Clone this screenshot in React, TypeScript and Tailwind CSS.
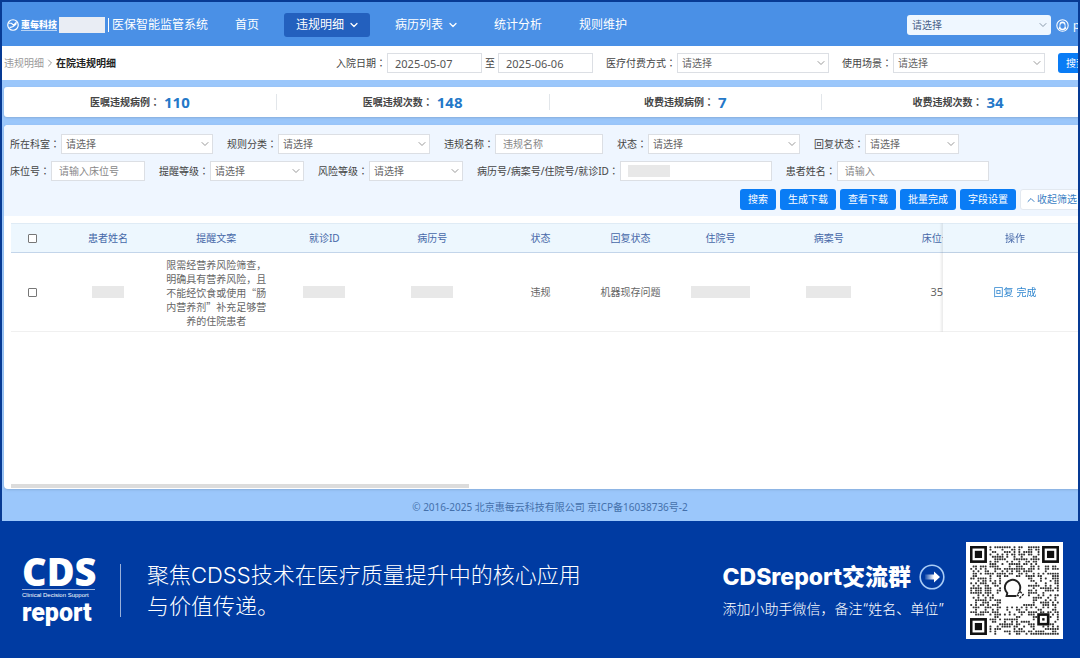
import type { ReactNode } from 'react'
import { ChevronDown, ChevronRight, ChevronUp } from 'lucide-react'
import clsx from 'clsx'

const navItems = [
  { label: '首页' },
  { label: '违规明细', active: true, menu: true },
  { label: '病历列表', menu: true },
  { label: '统计分析' },
  { label: '规则维护' },
]

const stats = [
  { label: '医嘱违规病例', value: 110 },
  { label: '医嘱违规次数', value: 148 },
  { label: '收费违规病例', value: 7 },
  { label: '收费违规次数', value: 34 },
]

const actions = ['搜索', '生成下载', '查看下载', '批量完成', '字段设置']

const columns = [
  { label: '患者姓名', width: 'w-[108px]' },
  { label: '提醒文案', width: 'w-[108px]' },
  { label: '就诊ID', width: 'w-[108px]' },
  { label: '病历号', width: 'w-[108px]' },
  { label: '状态', width: 'w-[108px]' },
  { label: '回复状态', width: 'w-[72px]' },
  { label: '住院号', width: 'w-[108px]' },
  { label: '病案号', width: 'w-[108px]' },
  { label: '床位号', width: 'w-[108px]' },
]

function Field({ id, label, children }: { id: string; label: string; children: ReactNode }) {
  return (
    <div className="flex items-center">
      <label htmlFor={id} className="mr-px whitespace-nowrap text-[#444]">
        {label}
        <span className="font-['Noto_Sans_CJK_TC',sans-serif]">：</span>
      </label>
      {children}
    </div>
  )
}

function Select({ id, className }: { id: string; className: string }) {
  return (
    <div className={clsx('relative', className)}>
      <select
        id={id}
        className="block h-5 w-full appearance-none border border-[#dcdfe4] bg-white pl-1 pr-4 text-[#666] outline-none"
      >
        <option>请选择</option>
      </select>
      <ChevronDown className="pointer-events-none absolute right-0.5 top-1 size-3 text-[#999]" />
    </div>
  )
}

function TextInput({ id, className, ...rest }: { id: string; className: string; placeholder?: string; defaultValue?: string }) {
  return (
    <input
      id={id}
      type="text"
      className={clsx('h-5 border border-[#dcdfe4] bg-white px-[7px] text-[#555] outline-none placeholder:text-[#888]', className)}
      {...rest}
    />
  )
}

function Masked({ className }: { className: string }) {
  return <div className={clsx('mx-auto h-3 bg-[#e8e8e8]', className)} />
}

function Header() {
  return (
    <header className="flex h-11 items-center bg-[#4a90e6] pl-[5px] pt-0.5 text-white">
      <svg viewBox="0 0 24 24" className="size-3 shrink-0" fill="none" stroke="currentColor" strokeWidth="2.4">
        <circle cx="12" cy="12" r="10.5" />
        <path d="M3 8.500h6l4 4 6-6M5 16.500c5 1 9-1 14-7.500" />
      </svg>
      <div className="ml-0.5 mr-0.5 shrink-0 font-black">
        <div className="text-[9px] leading-[11px]">惠每科技</div>
        <div className="h-px bg-white/60" />
      </div>
      <div className="h-4 w-[46px] shrink-0 bg-[#e9edf4]" />
      <div className="ml-[3px] h-3.5 w-px shrink-0 bg-white" />
      <h1 className="ml-[3px] whitespace-nowrap text-[12px]">医保智能监管系统</h1>
      <nav className="ml-[15px] flex gap-[13px]">
        {navItems.map((item) => (
          <button
            key={item.label}
            type="button"
            className={clsx(
              'flex h-6 items-center gap-1 whitespace-nowrap rounded-[3px] pl-3 text-[12px]',
              item.menu ? 'pr-2.5' : 'pr-3',
              item.active && 'bg-[#2360be]'
            )}
          >
            {item.label}
            {item.menu && <ChevronDown className="size-3" strokeWidth={2.5} />}
          </button>
        ))}
      </nav>
      <div className="relative ml-auto w-36 shrink-0">
        <select
          aria-label="院区"
          className="block h-5 w-full appearance-none rounded-[3px] bg-[#eff7ff] pl-[5px] pr-4 text-[#4a6288] outline-none"
        >
          <option>请选择</option>
        </select>
        <ChevronDown className="pointer-events-none absolute right-0.5 top-1 size-3 text-[#8899aa]" />
      </div>
      <button type="button" className="ml-[5px] flex w-[38px] shrink-0 items-center gap-1">
        <svg viewBox="0 0 24 24" className="size-[13px]">
          <circle cx="12" cy="12" r="10.5" fill="none" stroke="#fff" strokeWidth="2" />
          <path d="M12 4.500a5.500 5.500 0 0 0-5.500 5.500v3c0 2-1 3-2 4a9.500 9.500 0 0 0 15 0c-1-1-2-2-2-4v-3A5.500 5.500 0 0 0 12 4.500Z" fill="#fff" />
          <path d="M8 12a4 4 0 0 1 8 0v2a4 4 0 0 1-8 0Z" fill="#4a90e6" />
        </svg>
        <span className="text-[11px]">p</span>
      </button>
    </header>
  )
}

function TopBar() {
  return (
    <div className="flex h-[34px] items-center bg-white pl-0.5">
      <div className="flex items-center whitespace-nowrap">
        <a href="#" className="text-[#999]">违规明细</a>
        <ChevronRight className="size-3 text-[#999]" />
        <span className="font-bold text-[#222]">在院违规明细</span>
      </div>
      <div className="ml-auto flex shrink-0 items-center gap-[13px]">
        <Field id="from" label="入院日期">
          <TextInput id="from" defaultValue="2025-05-07" className="w-[95px] text-[11px]" />
          <label htmlFor="to" className="mx-[3px] text-[#444]">至</label>
          <TextInput id="to" defaultValue="2025-06-06" className="w-[95px] text-[11px]" />
        </Field>
        <Field id="pay" label="医疗付费方式">
          <Select id="pay" className="w-[152px]" />
        </Field>
        <Field id="scene" label="使用场景">
          <Select id="scene" className="w-[152px]" />
        </Field>
        <button type="button" className="h-5 rounded-[3px] bg-[#0a7cf5] px-2 text-white">搜索</button>
      </div>
    </div>
  )
}

function Filters() {
  return (
    <div className="bg-[#eff6ff] pb-1.5 pl-1.5 pr-2 pt-[9px]">
      <div className="flex gap-3.5">
        <Field id="dept" label="所在科室">
          <Select id="dept" className="w-[152px]" />
        </Field>
        <Field id="rule" label="规则分类">
          <Select id="rule" className="w-[152px]" />
        </Field>
        <Field id="name" label="违规名称">
          <TextInput id="name" placeholder="违规名称" className="w-[108px]" />
        </Field>
        <Field id="status" label="状态">
          <Select id="status" className="w-[152px]" />
        </Field>
        <Field id="reply" label="回复状态">
          <Select id="reply" className="w-[94px]" />
        </Field>
      </div>
      <div className="mt-[7px] flex gap-3.5">
        <Field id="bed" label="床位号">
          <TextInput id="bed" placeholder="请输入床位号" className="w-[94px]" />
        </Field>
        <Field id="remind" label="提醒等级">
          <Select id="remind" className="w-[94px]" />
        </Field>
        <Field id="risk" label="风险等级">
          <Select id="risk" className="w-[94px]" />
        </Field>
        <Field id="record" label="病历号/病案号/住院号/就诊ID">
          <div className="relative">
            <TextInput id="record" className="block w-[152px]" />
            <div className="absolute left-2 top-1 h-3 w-[42px] bg-[#e8e8e8]" />
          </div>
        </Field>
        <Field id="patient" label="患者姓名">
          <TextInput id="patient" placeholder="请输入" className="w-[152px]" />
        </Field>
      </div>
      <div className="mt-2 flex justify-end gap-1">
        {actions.map((action) => (
          <button key={action} type="button" className="h-[21px] rounded-[3px] bg-[#0a7cf5] px-2 text-white">
            {action}
          </button>
        ))}
        <button
          type="button"
          className="flex h-[21px] w-[66px] items-center whitespace-nowrap rounded-[3px] border border-[#e3e9f0] bg-white pl-1 text-[#3b7fc4]"
        >
          <ChevronUp className="size-3" />
          收起筛选
        </button>
      </div>
    </div>
  )
}

function ViolationTable() {
  return (
    <div className="mx-[7px] mt-[7px] overflow-hidden">
      <table className="w-[1124px] table-fixed border-separate border-spacing-0 text-center">
        <thead>
          <tr className="h-[30px] text-[#4668a8] *:border-b *:border-t *:border-b-[#c3d5ea] *:border-t-[#dfebf5] *:bg-[#edf7fe] *:font-normal">
            <th className="w-[43px]">
              <input type="checkbox" aria-label="全选" className="mx-auto block size-[9px] appearance-none rounded-[1px] border border-[#777] bg-white" />
            </th>
            {columns.map((col) => (
              <th key={col.label} className={col.width}>{col.label}</th>
            ))}
            <th className="sticky right-0 w-36 shadow-[-2px_0_2px_rgba(0,0,0,0.08)]">操作</th>
          </tr>
        </thead>
        <tbody>
          <tr className="h-[79px] text-[#666] *:border-b *:border-[#f0f0f0]">
            <td>
              <input type="checkbox" aria-label="选择此行" className="mx-auto block size-[9px] appearance-none rounded-[1px] border border-[#777] bg-white" />
            </td>
            <td><Masked className="w-8" /></td>
            <td className="px-[3px] pt-0.5 font-['Noto_Sans_CJK_SC',sans-serif] leading-[14px]">
              限需经营养风险筛查，
              <br />
              明确具有营养风险，且
              <br />
              不能经饮食或使用“肠
              <br />
              内营养剂”补充足够营
              <br />
              养的住院患者
            </td>
            <td><Masked className="w-[42px]" /></td>
            <td><Masked className="w-[42px]" /></td>
            <td>违规</td>
            <td>机器现存问题</td>
            <td><Masked className="w-[59px]" /></td>
            <td><Masked className="w-[45px]" /></td>
            <td className="text-[11px]">35</td>
            <td className="sticky right-0 bg-white shadow-[-2px_0_2px_rgba(0,0,0,0.08)]">
              <div className="flex justify-center gap-[3px]">
                <a href="#" className="text-[#2f86cf]">回复</a>
                <a href="#" className="text-[#2f86cf]">完成</a>
              </div>
            </td>
          </tr>
        </tbody>
      </table>
    </div>
  )
}

const QR_SIZE = 37

// finder squares, alignment square and centre logo are kept clear of data modules
function isReserved(x: number, y: number) {
  const finder = (x < 8 && y < 8) || (x > 28 && y < 8) || (x < 8 && y > 28)
  const alignment = x > 27 && x < 33 && y > 27 && y < 33
  const centre = Math.abs(x - 18) < 6 && Math.abs(y - 18) < 6
  return finder || alignment || centre
}

function buildModules() {
  const modules: { x: number; y: number }[] = []
  let seed = 20250607
  for (let y = 0; y < QR_SIZE; y++) {
    for (let x = 0; x < QR_SIZE; x++) {
      seed = (seed * 1103515245 + 12345) % 2147483648
      if (seed / 2147483648 > 0.5 && !isReserved(x, y)) modules.push({ x, y })
    }
  }
  return modules
}

const modules = buildModules()

function QrCode() {
  return (
    <svg viewBox="0 0 37 37" className="size-[97px] shrink-0 bg-white p-1" role="img" aria-label="微信二维码">
      {modules.map(({ x, y }) => (
        <rect key={`${x}-${y}`} x={x + 0.1} y={y + 0.1} width="0.8" height="0.8" rx="0.25" fill="#333" />
      ))}
      {[[0, 0], [30, 0], [0, 30]].map(([x, y]) => (
        <g key={`${x}-${y}`}>
          <rect x={x + 0.5} y={y + 0.5} width="6" height="6" fill="#fff" stroke="#111" strokeWidth="1.1" />
          <rect x={x + 2} y={y + 2} width="3" height="3" fill="#111" />
        </g>
      ))}
      <rect x="28.500" y="28.500" width="4" height="4" fill="#fff" stroke="#111" strokeWidth="1.1" />
      <rect x="30" y="30" width="1" height="1" fill="#111" />
      <path d="M19 20.800H15.200l.3-1.200A3.200 3.200 0 1 1 20.600 18.600" fill="none" stroke="#222" strokeWidth="0.8" strokeLinecap="round" />
      <path d="M20.800 18.900l1.300 1.300-1.300 1.300-1.300-1.300Z" fill="none" stroke="#222" strokeWidth="0.6" strokeDasharray="1 0.5" />
    </svg>
  )
}

function Banner() {
  return (
    <section className="flex items-center pb-5 pl-[22px] pr-[17px] pt-[21px] font-['Inter','Noto_Sans_CJK_SC',sans-serif] text-white">
      <div className="w-[73px] shrink-0">
        <div className="font-['Open_Sans',sans-serif] text-[38px] font-extrabold leading-8">CDS</div>
        <div className="mt-0.5 h-px bg-white/60" />
        <div className="whitespace-nowrap pt-px font-['Liberation_Sans',sans-serif] text-[6px] leading-2">
          Clinical Decision Support
        </div>
        <div className="font-['Roboto',sans-serif] text-[25px] font-black leading-7">report</div>
      </div>
      <div className="ml-[25px] h-[53px] w-px shrink-0 bg-white/60" />
      <p className="ml-[26px] text-[22px] font-light leading-[31px]">
        聚焦CDSS技术在医疗质量提升中的核心应用
        <br />
        与价值传递。
      </p>
      <div className="ml-auto mr-[21px] shrink-0">
        <div className="flex items-center gap-2">
          <h2 className="whitespace-nowrap text-[23px] font-extrabold leading-8">CDSreport交流群</h2>
          <svg viewBox="0 0 26 26" className="size-[26px]">
            <defs>
              <linearGradient id="arrow" x1="0" x2="1">
                <stop offset="0" stopColor="#fff" stopOpacity="0.1" />
                <stop offset="0.6" stopColor="#fff" />
              </linearGradient>
            </defs>
            <circle cx="13" cy="13" r="11.800" fill="none" stroke="#a9ccf5" strokeWidth="1.600" />
            <path d="M6 10.500h9V7.500l6 5.500-6 5.500v-3H6Z" fill="url(#arrow)" />
          </svg>
        </div>
        <p className="mt-1 whitespace-nowrap text-[14px] font-light leading-6">添加小助手微信，备注“姓名、单位”</p>
      </div>
      <QrCode />
    </section>
  )
}

export default function App() {
  return (
    <div className="min-h-screen bg-[#003ba2] font-['Noto_Sans','Noto_Sans_CJK_SC',sans-serif] text-[10px]">
      <div className="overflow-hidden border-x-2 border-t-2 border-[#073a94] bg-[#9bc7fb]">
        <div className="-mr-4">
          <Header />
          <TopBar />
          <main className="ml-0.5 pt-[7px]">
            <section className="flex h-[30px] items-center rounded-[3px] bg-white shadow-sm">
              {stats.map((stat) => (
                <div
                  key={stat.label}
                  className="flex h-4 flex-1 items-center justify-center gap-1 border-r border-[#e2e6ea] last:border-r-0"
                >
                  <span className="font-bold text-[#444]">
                    {stat.label}
                    <span className="font-['Noto_Sans_CJK_TC',sans-serif]">：</span>
                  </span>
                  <span className="text-[15px] font-bold text-[#2478c8]">{stat.value}</span>
                </div>
              ))}
            </section>
            <section className="mt-2 overflow-hidden rounded-[4px] bg-white pb-px shadow-sm">
              <Filters />
              <ViolationTable />
              <div className="ml-[7px] mt-[152px] h-1 w-[42%] bg-[#dcdcdc]" />
            </section>
          </main>
        </div>
        <footer className="flex h-8 items-center justify-center pl-5 pt-1 text-[10px] text-[#4470ab]">
          © 2016-2025 北京惠每云科技有限公司 京ICP备16038736号-2
        </footer>
      </div>
      <Banner />
    </div>
  )
}
